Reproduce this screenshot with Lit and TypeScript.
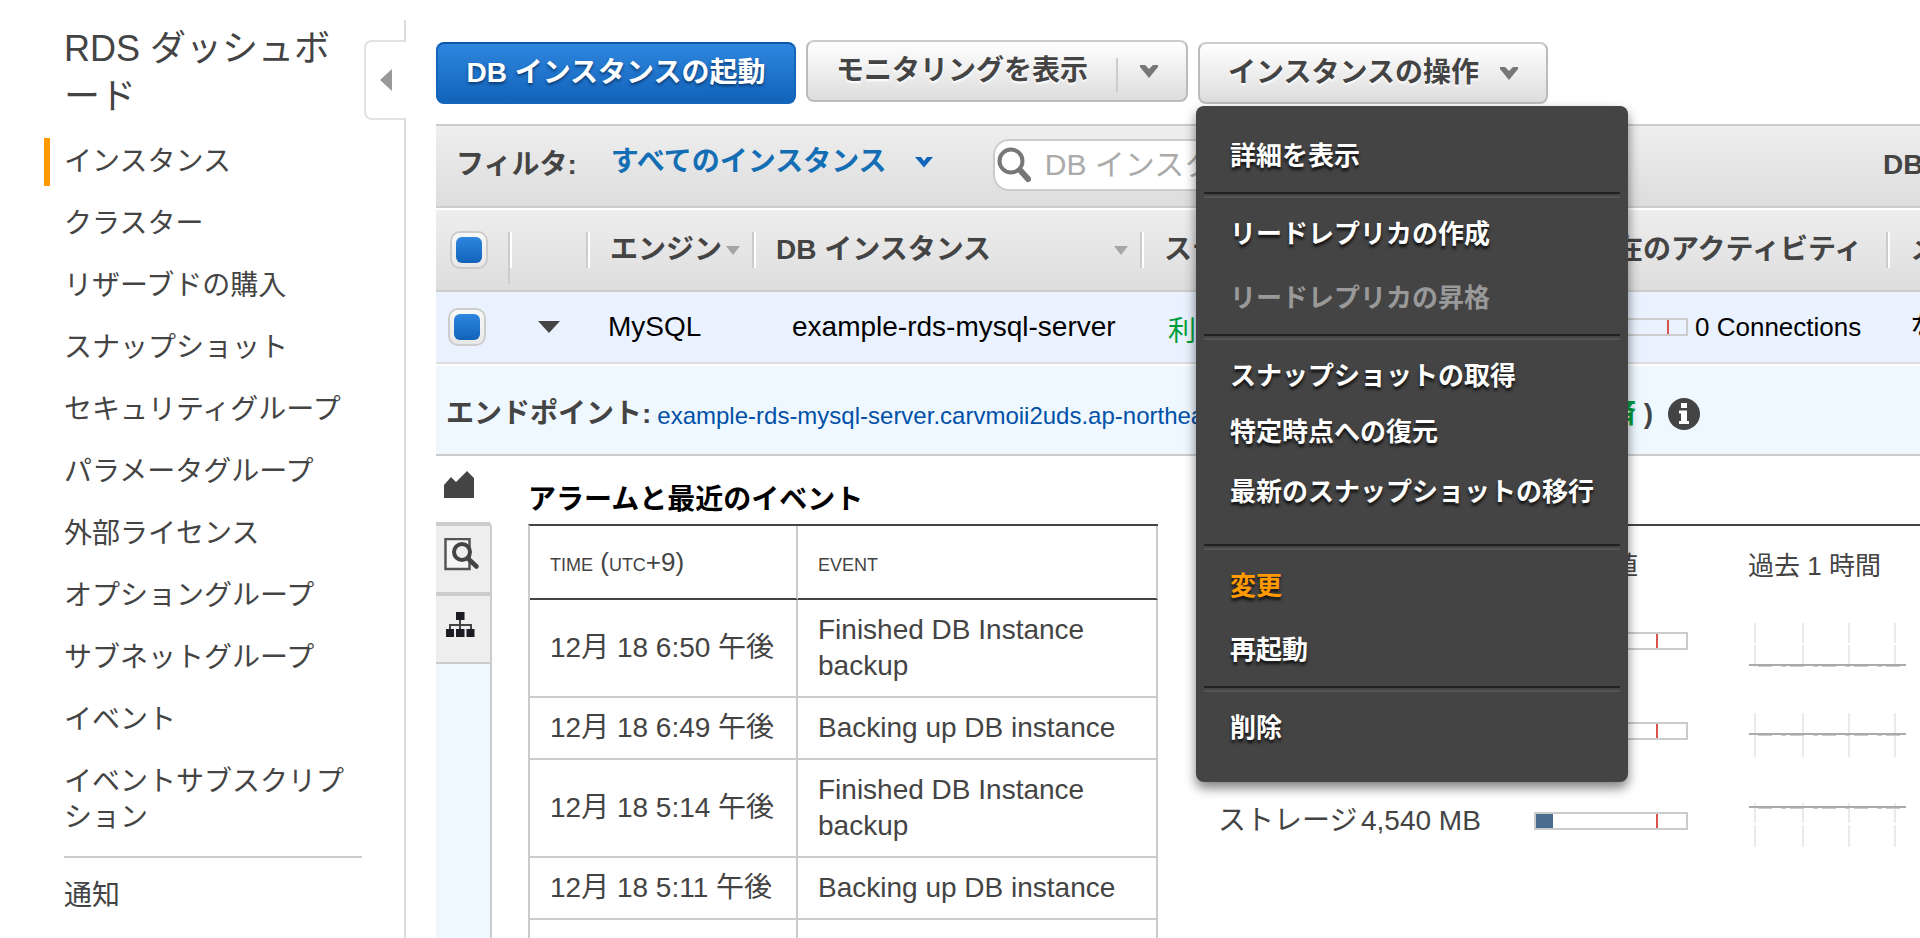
import { LitElement, html, css, svg } from "lit";
import { customElement, property } from "lit/decorators.js";
import { classMap } from "lit/directives/class-map.js";
import { styleMap } from "lit/directives/style-map.js";

const NAV = [
  "インスタンス",
  "クラスター",
  "リザーブドの購入",
  "スナップショット",
  "セキュリティグループ",
  "パラメータグループ",
  "外部ライセンス",
  "オプショングループ",
  "サブネットグループ",
  "イベント",
  "イベントサブスクリプション",
];

interface MenuEntry {
  label: string;
  kind?: "disabled" | "active" | "compact" | "last";
}

const MENU: MenuEntry[][] = [
  [{ label: "詳細を表示" }],
  [{ label: "リードレプリカの作成" }, { label: "リードレプリカの昇格", kind: "disabled" }],
  [
    { label: "スナップショットの取得" },
    { label: "特定時点への復元", kind: "compact" },
    { label: "最新のスナップショットの移行", kind: "last" },
  ],
  [{ label: "変更", kind: "active" }, { label: "再起動" }],
  [{ label: "削除" }],
];

const EVENTS = [
  ["12月 18 6:50 午後", "Finished DB Instance backup"],
  ["12月 18 6:49 午後", "Backing up DB instance"],
  ["12月 18 5:14 午後", "Finished DB Instance backup"],
  ["12月 18 5:11 午後", "Backing up DB instance"],
  ["", ""],
];

const METRICS = [
  { label: "", value: "", fill: 1, line: 42 },
  { label: "", value: "", fill: 8, line: 21 },
  { label: "ストレージ", value: "4,540 MB", fill: 11, line: 4 },
];

const chevron = html`<svg class="chevron" width="18" height="14" viewBox="0 0 18 14" aria-hidden="true">
  <path d="M0 1h5l4 4 4-4h5v2L9 14 0 3z" fill="currentColor" />
</svg>`;

const flatChevron = html`<svg class="chevron" width="18" height="12" viewBox="0 0 18 12" aria-hidden="true">
  <path d="M0 1h6l3 4 3-4h6L9 11.500z" fill="currentColor" />
</svg>`;

/** Horizontal gauge with a red threshold mark. */
@customElement("usage-gauge")
export class UsageGauge extends LitElement {
  @property({ type: Number }) fill = 0;
  @property({ type: Number }) limit = 80;

  static styles = css`
    :host {
      display: block;
      box-sizing: border-box;
      height: 18px;
      border: 2px solid #ccc;
    }
    .track {
      position: relative;
      height: 100%;
    }
    .fill {
      height: 100%;
      background: #4a6c8e;
    }
    .limit {
      position: absolute;
      top: 0;
      bottom: 0;
      width: 2px;
      background: #d9534f;
    }
  `;

  render() {
    return html`<div class="track">
      <div class="fill" style=${styleMap({ width: `${this.fill}%` })}></div>
      <div class="limit" style=${styleMap({ left: `${this.limit}%` })}></div>
    </div>`;
  }
}

/** One-hour history line over four vertical ticks. */
@customElement("spark-line")
export class SparkLine extends LitElement {
  @property({ type: Number }) level = 0;

  static styles = css`
    :host {
      display: block;
      height: 44px;
    }
  `;

  render() {
    return html`<svg width="160" height="44" viewBox="0 0 160 44" aria-hidden="true">
      ${[7, 55, 101, 147].map(
        (x) => svg`<path d="M${x} 0v20M${x} 22v22" stroke="#eaeaea" stroke-width="2" />`
      )}
      <path d="M1 ${this.level}h157" stroke="#aaa" stroke-width="2" />
      <path d="M10 ${this.level + 1.5}h147" stroke="#ccc" stroke-width="1" stroke-dasharray="14 9 5 4" />
    </svg>`;
  }
}

@customElement("app-root")
export class AppRoot extends LitElement {
  static styles = css`
    :host {
      display: flex;
      height: 100vh;
      overflow: hidden;
      background: #fff;
      color: #444;
      font-family: "Liberation Sans", "Noto Sans CJK JP", sans-serif;
      font-size: 28px;
      line-height: 36px;
      line-break: normal;
    }
    *,
    *::before,
    *::after {
      box-sizing: border-box;
    }
    button,
    input,
    select {
      font: inherit;
      color: inherit;
      margin: 0;
    }
    svg {
      display: block;
      flex: none;
    }
    a {
      text-decoration: none;
      color: inherit;
    }
    table {
      border-collapse: separate;
      border-spacing: 0;
    }
    th {
      text-align: left;
    }

    /* sidebar */
    .sidebar {
      display: flex;
      flex: none;
      width: 406px;
      padding-top: 20px;
    }
    .nav {
      flex: none;
      width: 362px;
      padding-left: 44px;
    }
    .title {
      margin: 5px 0 17px;
      padding-left: 20px;
      font-size: 36px;
      line-height: 48px;
      font-weight: 400;
    }
    .nav ul {
      display: flex;
      flex-direction: column;
      gap: 14px;
      margin: 0;
      padding: 0;
      list-style: none;
    }
    .nav li a {
      display: block;
      padding: 6px 0 6px 14px;
      border-left: 6px solid transparent;
    }
    .nav li.current a {
      border-left-color: #f90;
    }
    .nav hr {
      height: 2px;
      margin: 14px 0 14px 20px;
      border: 0;
      background: #ccc;
    }
    .edge {
      display: flex;
      flex-direction: column;
      flex: 1;
      padding-left: 2px;
    }
    .edge::before {
      content: "";
      height: 20px;
      border-right: 2px solid #ddd;
    }
    .edge::after {
      content: "";
      flex: 1;
      border-right: 2px solid #ddd;
    }
    .collapse {
      height: 80px;
      padding: 0 0 0 14px;
      border: 2px solid #e2e2e2;
      border-right: 0;
      border-radius: 8px 0 0 8px;
      background: #fff;
    }

    /* main */
    .main {
      flex: 1;
      min-width: 0;
      margin-left: 30px;
      padding-top: 40px;
    }
    .toolbar {
      display: flex;
      align-items: flex-end;
      gap: 10px;
      margin-bottom: 20px;
    }
    .btn {
      display: flex;
      align-items: center;
      height: 62px;
      padding: 0 28px;
      border: 2px solid #bbb;
      border-top-color: #ccc;
      border-radius: 8px;
      background: linear-gradient(#fff, #ddd);
      font-weight: 700;
      text-shadow: 0 2px 2px #fff;
      white-space: nowrap;
    }
    .primary {
      justify-content: center;
      min-width: 360px;
      border-color: #1464b8;
      border-top-color: #0a57a8;
      background: linear-gradient(#2f86de, #1163b9);
      color: #fff;
      text-shadow: 0 2px 3px #0a3a70;
    }
    .chevron {
      color: #777;
    }
    .split {
      display: flex;
      margin-bottom: 2px;
      border: 2px solid #bbb;
      border-top-color: #ccc;
      border-radius: 8px;
      background: linear-gradient(#fff, #ddd);
      overflow: hidden;
    }
    .split .btn {
      height: 58px;
      border: 0;
      border-radius: 0;
      background: none;
    }
    .split .more {
      padding: 0 28px 0 24px;
      background: linear-gradient(#ccc, #ccc) 0 16px / 2px 34px no-repeat;
    }
    .dropdown {
      position: relative;
    }
    .dropdown .btn {
      gap: 21px;
    }

    /* menu */
    .menu {
      position: absolute;
      z-index: 2;
      top: 64px;
      left: -2px;
      width: 432px;
      padding: 18px 8px 22px;
      border-radius: 8px;
      background: #444;
      box-shadow: 0 6px 12px rgba(0, 0, 0, 0.5);
      font-size: 26px;
    }
    .group + .group {
      margin-top: 4px;
    }
    .group + .group::before {
      content: "";
      display: block;
      height: 6px;
      margin-bottom: 4px;
      border-top: 2px solid #222;
      border-bottom: 2px solid #555;
    }
    .item {
      display: block;
      width: 100%;
      height: 64px;
      padding: 0 26px;
      border: 0;
      background: none;
      color: #fff;
      font-weight: 700;
      text-align: left;
      text-shadow: 0 3px 3px #111;
      white-space: nowrap;
    }
    .item.compact {
      height: 48px;
    }
    .item.last {
      height: 72px;
      margin-bottom: 16px;
    }
    .item.disabled {
      color: #999;
      text-shadow: none;
    }
    .item.active {
      color: #f90;
    }

    /* filter bar */
    .filter {
      display: flex;
      align-items: center;
      gap: 34px;
      height: 84px;
      padding: 0 0 2px 20px;
      border-top: 2px solid #ccc;
      border-bottom: 2px solid #ccc;
      background: linear-gradient(#eee, #ddd);
      font-weight: 700;
      white-space: nowrap;
    }
    .scope {
      display: grid;
      align-items: center;
      width: 348px;
      margin-bottom: 6px;
      color: #146eb4;
    }
    .scope select,
    .scope svg {
      grid-area: 1 / 1;
    }
    .scope select {
      appearance: none;
      width: 100%;
      height: 40px;
      padding: 0;
      border: 0;
      background: none;
      font-weight: 700;
    }
    .scope .chevron {
      margin-left: 304px;
      color: #1166bb;
      pointer-events: none;
    }
    .search {
      display: flex;
      align-items: center;
      gap: 14px;
      width: 560px;
      height: 52px;
      padding-left: 2px;
      border: 2px solid #ccc;
      border-radius: 16px;
      background: #fff;
      font-size: 30px;
      font-weight: 400;
    }
    .search input {
      flex: 1;
      min-width: 0;
      height: 44px;
      padding: 0;
      border: 0;
      outline: 0;
      background: none;
    }
    .search input::placeholder {
      color: #aaa;
      opacity: 1;
    }
    .count {
      width: 37px;
      margin-left: auto;
    }

    /* instance table */
    .instances {
      width: 100%;
      margin-top: 2px;
      table-layout: fixed;
    }
    .instances th,
    .instances td {
      padding: 0 0 0 24px;
      overflow: hidden;
      white-space: nowrap;
    }
    .instances thead tr {
      background: linear-gradient(#eee, #ddd);
    }
    .instances th {
      height: 82px;
      border-bottom: 2px solid #ccc;
      background: linear-gradient(#ccc, #ccc) 0 22px / 2px 36px no-repeat,
        linear-gradient(#fff, #fff) 2px 22px / 2px 36px no-repeat;
    }
    .instances th.long {
      background: linear-gradient(#ccc, #ccc) 0 22px / 2px 52px no-repeat,
        linear-gradient(#fff, #fff) 2px 22px / 2px 36px no-repeat;
    }
    .instances th.pick {
      padding-left: 14px;
      background: none;
    }
    .instances td {
      height: 72px;
      border-bottom: 2px solid #ddd;
      background: #eaf2ff;
      color: #000;
    }
    .instances td.pick {
      padding-left: 12px;
    }
    .instances td.engine {
      padding-left: 22px;
    }
    .instances td.name {
      padding-left: 40px;
    }
    .instances td.status {
      padding-top: 10px;
      padding-left: 28px;
      color: #009e3a;
    }
    .col-pick {
      width: 72px;
    }
    .col-open {
      width: 78px;
    }
    .col-engine {
      width: 166px;
    }
    .col-name {
      width: 388px;
    }
    .col-status {
      width: 423px;
    }
    .col-activity {
      width: 323px;
    }
    .head {
      display: flex;
      align-items: center;
      justify-content: space-between;
      padding-right: 12px;
    }
    .activity {
      display: flex;
      align-items: center;
      gap: 7px;
      font-size: 26px;
    }
    .activity usage-gauge {
      width: 101px;
    }
    .check {
      appearance: none;
      display: grid;
      place-content: center;
      width: 38px;
      height: 38px;
      border: 2px solid #ccc;
      border-radius: 10px;
      background: linear-gradient(#f8f8f8, #e8e8e8);
    }
    .check:checked::before {
      content: "";
      width: 26px;
      height: 26px;
      border-radius: 6px;
      background: linear-gradient(#2f86de, #1163b9);
    }
    .open {
      display: block;
      padding: 6px;
      border: 0;
      background: none;
    }

    /* endpoint */
    .endpoint {
      display: flex;
      align-items: center;
      height: 90px;
      margin-top: 2px;
      padding: 8px 0 0 10px;
      border-bottom: 2px solid #ccc;
      background: #f0f8ff;
      font-weight: 700;
      white-space: nowrap;
    }
    .endpoint a {
      margin-left: 6px;
      padding-top: 4px;
      color: #0050a8;
      font-size: 24px;
      font-weight: 400;
    }
    .auth {
      width: 122px;
      text-align: right;
    }
    .ok {
      color: #009e3a;
    }
    .info {
      margin-left: 15px;
    }

    /* details */
    .details {
      display: flex;
      align-items: stretch;
    }
    .tabs {
      display: flex;
      flex-direction: column;
      flex: none;
      width: 56px;
      background: #f0f8ff;
    }
    .tab {
      height: 70px;
      padding: 0 0 8px 8px;
      border: 0;
      border-right: 2px solid #ccc;
      border-bottom: 4px solid #ccc;
      background: #eee;
    }
    .tab.on {
      border-right-color: #fff;
      background: #fff;
    }
    .tab:last-of-type {
      height: 68px;
      border-bottom-width: 2px;
    }
    .tabs::after {
      content: "";
      flex: 1;
      border-right: 2px solid #ccc;
    }
    .events {
      flex: none;
      width: 630px;
      margin-left: 36px;
      padding-top: 26px;
    }
    .events h2 {
      margin: 0 0 6px;
      color: #000;
      font-size: 28px;
      line-height: 36px;
    }
    .events table {
      width: 100%;
      border-top: 2px solid #444;
      border-left: 2px solid #ccc;
    }
    .events th,
    .events td {
      height: 62px;
      padding: 12px 20px;
      border-right: 2px solid #ccc;
      border-bottom: 2px solid #ccc;
    }
    .events th {
      height: 74px;
      border-bottom-color: #444;
      font-size: 26px;
      font-weight: 400;
      font-variant: small-caps;
    }
    .events .time {
      width: 268px;
      white-space: nowrap;
    }
    .metrics {
      flex: 1;
      min-width: 0;
      margin: 68px 0 0 60px;
    }
    .metrics table {
      width: 100%;
      table-layout: fixed;
      border-top: 2px solid #444;
    }
    .metrics th,
    .metrics td {
      padding: 0;
      font-weight: 400;
      white-space: nowrap;
    }
    .metrics thead th {
      padding: 22px 0 12px;
      font-size: 26px;
    }
    .metrics tbody tr {
      height: 90px;
    }
    .metrics .history {
      padding-top: 8px;
    }
    .m-label {
      width: 143px;
    }
    .m-value {
      width: 173px;
    }
    .m-bar {
      width: 214px;
    }
    .metrics usage-gauge {
      width: 154px;
    }
  `;

  private sortMark() {
    return html`<svg width="14" height="9" viewBox="0 0 14 9" aria-hidden="true">
      <path d="M0 0h14L7 9z" fill="#a5a5a5" />
    </svg>`;
  }

  private sidebar() {
    return html`<aside class="sidebar">
      <nav class="nav">
        <h1 class="title"><a href="#">RDS ダッシュボード</a></h1>
        <ul>
          ${NAV.map(
            (label, i) => html`<li class=${classMap({ current: i === 0 })}><a href="#">${label}</a></li>`
          )}
        </ul>
        <hr />
        <ul>
          <li><a href="#">通知</a></li>
        </ul>
      </nav>
      <div class="edge">
        <button class="collapse" aria-label="ナビゲーションを閉じる">
          <svg width="12" height="22" viewBox="0 0 12 22" aria-hidden="true">
            <path d="M12 0v22L0 11z" fill="#999" />
          </svg>
        </button>
      </div>
    </aside>`;
  }

  private toolbar() {
    return html`<div class="toolbar">
      <button class="btn primary">DB インスタンスの起動</button>
      <div class="split">
        <button class="btn">モニタリングを表示</button>
        <button class="btn more" aria-label="モニタリングの種類">${chevron}</button>
      </div>
      <div class="dropdown">
        <button class="btn" aria-haspopup="menu" aria-expanded="true">インスタンスの操作 ${chevron}</button>
        <div class="menu" role="menu">
          ${MENU.map(
            (group) => html`<div class="group" role="group">
              ${group.map(
                (entry) => html`<button
                  role="menuitem"
                  class=${`item ${entry.kind ?? ""}`}
                  ?disabled=${entry.kind === "disabled"}
                >
                  ${entry.label}
                </button>`
              )}
            </div>`
          )}
        </div>
      </div>
    </div>`;
  }

  private filterBar() {
    return html`<div class="filter">
      <label for="scope">フィルタ:</label>
      <div class="scope">
        <select id="scope">
          <option>すべてのインスタンス</option>
        </select>
        ${flatChevron}
      </div>
      <div class="search">
        <svg width="34" height="36" viewBox="0 0 34 36" aria-hidden="true">
          <circle cx="14" cy="14" r="11.500" fill="none" stroke="#777" stroke-width="4" />
          <path d="M23 23l8 9" stroke="#777" stroke-width="6" stroke-linecap="round" />
        </svg>
        <input type="text" aria-label="DB インスタンスの検索" placeholder="DB インスタンスの検索" />
      </div>
      <div class="count">DB</div>
    </div>`;
  }

  private instances() {
    return html`<table class="instances">
        <colgroup>
          <col class="col-pick" />
          <col class="col-open" />
          <col class="col-engine" />
          <col class="col-name" />
          <col class="col-status" />
          <col class="col-activity" />
          <col />
        </colgroup>
        <thead>
          <tr>
            <th class="pick"><input class="check" type="checkbox" checked aria-label="すべて選択" /></th>
            <th class="long"></th>
            <th><div class="head">エンジン${this.sortMark()}</div></th>
            <th><div class="head">DB インスタンス${this.sortMark()}</div></th>
            <th>ステータス</th>
            <th>現在のアクティビティ</th>
            <th>メンテナンス</th>
          </tr>
        </thead>
        <tbody>
          <tr>
            <td class="pick"><input class="check" type="checkbox" checked aria-label="選択" /></td>
            <td>
              <button class="open" aria-label="詳細">
                <svg width="22" height="12" viewBox="0 0 22 12" aria-hidden="true">
                  <path d="M0 0h22L11 12z" fill="#444" />
                </svg>
              </button>
            </td>
            <td class="engine">MySQL</td>
            <td class="name">example-rds-mysql-server</td>
            <td class="status">利用可能</td>
            <td>
              <div class="activity"><usage-gauge .limit=${80}></usage-gauge>0 Connections</div>
            </td>
            <td>なし</td>
          </tr>
        </tbody>
      </table>
      <div class="endpoint">
        <span>エンドポイント:</span>
        <a href="#">example-rds-mysql-server.carvmoii2uds.ap-northeast-1.rds.amazonaws.com:3306</a>
        <span class="auth">( <span class="ok">承認済</span> )</span>
        <svg class="info" width="32" height="32" viewBox="0 0 32 32" aria-hidden="true">
          <circle cx="16" cy="16" r="16" fill="#444" />
          <path d="M13 5h6v5h-6zM11 12.500h8V23h2v3H11v-3h2v-7.500h-2z" fill="#fff" />
        </svg>
      </div>`;
  }

  private details() {
    return html`<div class="details">
      <div class="tabs">
        <button class="tab on" aria-label="モニタリング">
          <svg width="30" height="28" viewBox="0 0 30 28" aria-hidden="true">
            <path d="M0 27V14l7-8 5 5L23 0l7 7v20z" fill="#444" />
          </svg>
        </button>
        <button class="tab" aria-label="詳細">
          <svg width="36" height="34" viewBox="0 0 36 34" aria-hidden="true">
            <path d="M1.500 1h24v30h-24z" fill="#f6f6f6" stroke="#555" stroke-width="2.500" />
            <circle cx="18" cy="14" r="8" fill="#eee" stroke="#444" stroke-width="4" />
            <path d="M24 20.500l8.500 8" stroke="#444" stroke-width="4.500" stroke-linecap="round" />
          </svg>
        </button>
        <button class="tab" aria-label="構成">
          <svg width="32" height="26" viewBox="0 0 32 26" aria-hidden="true">
            <path d="M6 18v-5h21v5M16 8v10" fill="none" stroke="#444" stroke-width="2" />
            <path d="M12 0h8.500v8H12zM2 17h8v8H2zM12 17h8.500v8H12zM22.500 17h8v8h-8z" fill="#1c1c24" />
          </svg>
        </button>
      </div>
      <section class="events">
        <h2>アラームと最近のイベント</h2>
        <table>
          <thead>
            <tr>
              <th class="time">time (utc+9)</th>
              <th>event</th>
            </tr>
          </thead>
          <tbody>
            ${EVENTS.map(([time, text]) => html`<tr><td>${time}</td><td>${text}</td></tr>`)}
          </tbody>
        </table>
      </section>
      <section class="metrics">
        <table>
          <thead>
            <tr>
              <th class="m-label"></th>
              <th class="m-value"></th>
              <th class="m-bar">現在の値</th>
              <th>過去 1 時間</th>
            </tr>
          </thead>
          <tbody>
            ${METRICS.map(
              (m) => html`<tr>
                <th>${m.label}</th>
                <td>${m.value}</td>
                <td><usage-gauge .fill=${m.fill} .limit=${80}></usage-gauge></td>
                <td class="history"><spark-line .level=${m.line}></spark-line></td>
              </tr>`
            )}
          </tbody>
        </table>
      </section>
    </div>`;
  }

  render() {
    return html`${this.sidebar()}
      <main class="main" lang="ja">
        ${this.toolbar()} ${this.filterBar()} ${this.instances()} ${this.details()}
      </main>`;
  }
}
